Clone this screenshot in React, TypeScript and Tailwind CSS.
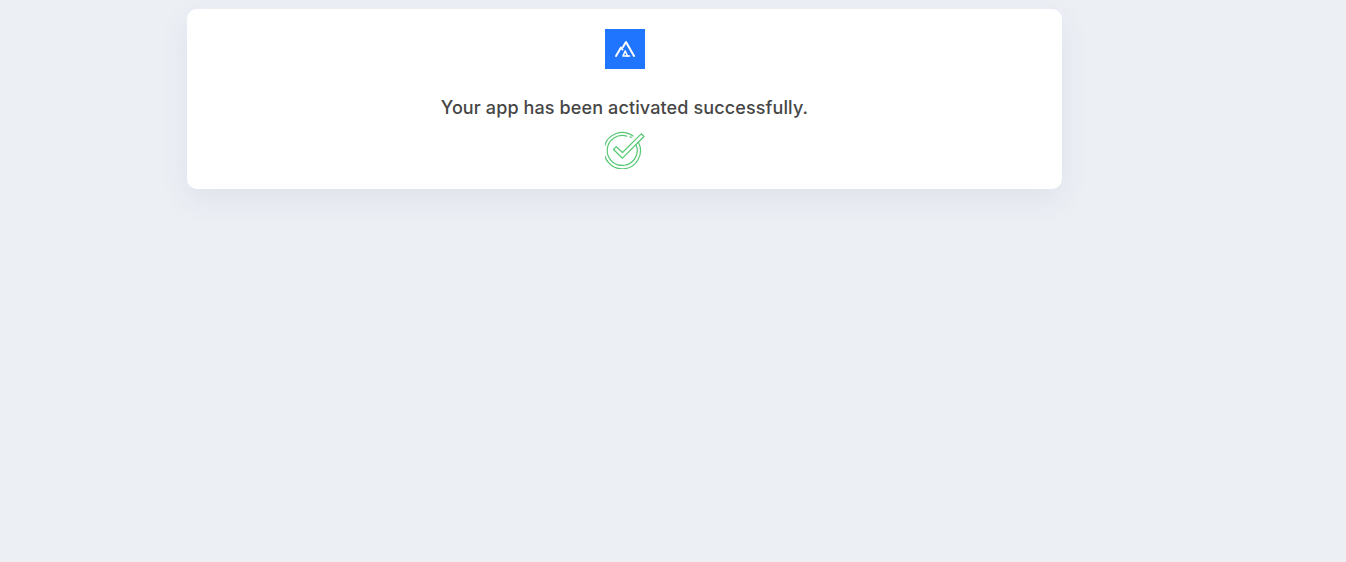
export default function App() {
  return (
    <div className="min-h-[562px] bg-[#ecf0f5] pt-[9px] pl-[187px] overflow-hidden" style={{ fontFamily: '"Inter", "Open Sans", sans-serif' }}>
      <div className="w-[875px] h-[180px] bg-white rounded-[10px] shadow-[0_10px_30px_rgba(82,63,105,0.08)] flex flex-col items-center pt-[20px]">
        <div className="w-[40px] h-[40px] bg-[#1f75fe] flex items-center justify-center">
          <svg width="40" height="40" viewBox="0 0 40 40" fill="none" stroke="#fff" strokeWidth="2" strokeLinejoin="round" strokeLinecap="round">
            <path d="M11 27 L16 18.5 L17.5 20.5" />
            <path d="M18 18 L21 13 L29 27" />
            <path d="M22.5 27 L18 27 L20.2 22 Z" strokeWidth="1.6" />
            <path d="M22 27 H24.5" strokeWidth="1.6" />
          </svg>
        </div>
        <p className="mt-[27px] text-[18px] leading-[24px] font-medium text-[#464646] tracking-[0.12px] whitespace-nowrap">Your app has been activated successfully.</p>
        <svg className="mt-[11px]" width="40" height="38" viewBox="0 0 40 38" fill="none" stroke="#55c973" strokeWidth="1.2" strokeLinejoin="round" strokeLinecap="round">
          <path d="M33.5 11.5 A18.2 18.2 0 1 1 28 5" />
          <path d="M31 13.5 A15 15 0 1 1 22 5.2" />
          <path d="M25 5.8 L26.2 6.4" />
          <path d="M8.5 18.5 L11.3 15.7 L17.5 21.5 L36.2 2.8 L39 5.5 L17.5 27.2 Z" />
        </svg>
      </div>
    </div>
  );
}
